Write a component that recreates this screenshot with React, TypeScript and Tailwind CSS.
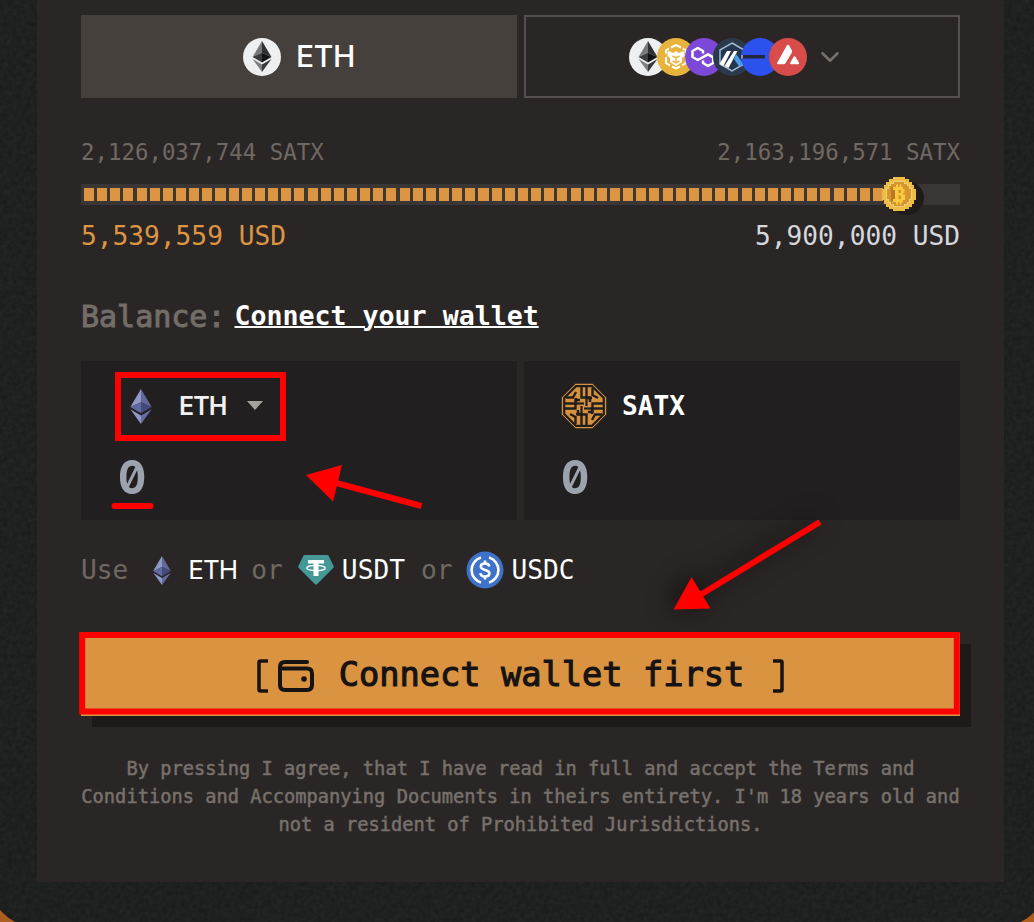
import { ChevronDown } from 'lucide-react';

const EthMark = ({ className, tone }: { className: string; tone: 'dark' | 'violet' }) => {
  const c =
    tone === 'dark'
      ? ['#77797a', '#303132', '#3b3c3d', '#131415', '#7d7e80', '#3a3b3c']
      : ['#8f98c8', '#62689a', '#6269a0', '#454a7c', '#8e97c6', '#646b9f'];
  return (
    <svg viewBox="0 0 22 36" className={className}>
      <path d="M11 0 0 18.5l11-5z" fill={c[0]} />
      <path d="m11 0 11 18.5-11-5z" fill={c[1]} />
      <path d="M0 18.5 11 13.5V25z" fill={c[2]} />
      <path d="M22 18.5 11 13.5V25z" fill={c[3]} />
      <path d="M0 20.8 11 27.3V36z" fill={c[4]} />
      <path d="M22 20.8 11 27.3V36z" fill={c[5]} />
    </svg>
  );
};

const EthCoin = () => (
  <span className="flex size-[38px] shrink-0 items-center justify-center rounded-full bg-[#eeeff1]">
    <EthMark className="h-[31px] w-5" tone="dark" />
  </span>
);

const BnbCoin = () => (
  <svg viewBox="0 0 38 38" className="-ml-[10px] size-[38px] shrink-0">
    <circle cx="19" cy="19" r="19" fill="#e8b33c" />
    <g fill="none" stroke="#fff" strokeWidth="2">
      <path d="m14 9.500 5-2.500 5 2.500M9 15.500v-3l3-2M29 15.500v-3l-3-2M9 19v6l4 2.500M29 19v6l-4 2.500M15 28.500l4 2 4-2" />
    </g>
    <path d="m12 13 4 2 3-2 3 2 4-2 1.500 1v4l-2.500 2v4L19 28l-6-4v-4l-2.500-2v-4z" fill="#fff" />
    <path d="m15.500 18 3.500 2 3.500-2M19 20v3.500M15.500 23l3.500 2 3.500-2" stroke="#e8b33c" strokeWidth="1.500" fill="none" />
  </svg>
);

const PolygonCoin = () => (
  <svg viewBox="0 0 38 38" className="-ml-[10px] size-[38px] shrink-0">
    <circle cx="19" cy="19" r="19" fill="#7b48d8" />
    <path
      d="m18 15.500v-2.500l-5.200-3-5.300 3v6l5.300 3L23 16.300l5.200 3v5.700L23 28l-5-3v-2.500"
      fill="none"
      stroke="#fff"
      strokeWidth="2.500"
      strokeLinejoin="round"
    />
  </svg>
);

const ArbitrumCoin = () => (
  <svg viewBox="0 0 38 38" className="-ml-[10px] size-[38px] shrink-0">
    <circle cx="19" cy="19" r="19" fill="#2c394b" />
    <path d="m19 5 12 7v14l-12 7-12-7V12z" fill="#24364d" stroke="#9fb9d3" strokeWidth="1.500" />
    <path d="M14 13h4L10.500 28 6.500 26zM21 13h3.500L15.500 30l-4-2z" fill="#fff" />
    <path d="m23 16 7.500 10-4 3-5.500-8z" fill="#4b9bea" />
  </svg>
);

const BaseCoin = () => (
  <svg viewBox="0 0 38 38" className="-ml-[10px] size-[38px] shrink-0">
    <circle cx="19" cy="19" r="19" fill="#2c51ed" />
    <path d="M1 17h23v3.500H1z" fill="#222740" />
    <path d="M0 17h2v3.500H0z" fill="#8798c0" />
  </svg>
);

const AvaxCoin = () => (
  <svg viewBox="0 0 38 38" className="-ml-[10px] size-[38px] shrink-0">
    <circle cx="19" cy="19" r="19" fill="#d84c49" />
    <path
      d="M17.800 7.500q1.200-1.500 2.400 0l2.600 4.800q.6 1.200 0 2.400L16.500 25.300q-.7 1-2 1H9q-1.500-.2-.8-1.600zM24.600 18.800q.9-1.200 1.800 0l3.600 6q.6 1.400-1 1.500h-7q-1.500-.1-.8-1.500z"
      fill="#fff"
    />
  </svg>
);

const BitcoinThumb = () => (
  <svg viewBox="0 0 34 34" className="size-[34px]">
    <path d="M11 0h12v2h4v3h3v3h2v4h2v11h-2v4h-2v3h-3v2h-4v2H11v-2H7v-2H4v-3H2v-4H0V12h2V8h2V5h3V2h4z" fill="#eebd46" />
    <path d="M11 4h12v2h3v2h2v3h2v12h-2v3h-2v2h-3v2H11v-2H8v-2H6v-3H4V11h2V8h2V6h3z" fill="#ecd074" />
    <path d="M12 5h10v2h3v2h2v3h2v10h-2v3h-2v2h-3v2H12v-2H9v-2H7v-3H5V12h2V9h2V7h3z" fill="#d8952e" />
    <path d="M9 10h4v14H9z" fill="#b97822" />
    <path
      d="M11 10h3V7.500h2V10h1.500V7.500h2V10H21v2h1.500v4H21v1.500h2V23h-2v2h-1.500v2.500h-2V25H16v2.500h-2V25h-3v-3h2v-9h-2zM16.500 13v3H19v-3zM16.500 18.500V22H19v-3.500z"
      fill="#f9c93f"
      fillRule="evenodd"
    />
  </svg>
);

const SatxLogo = () => (
  <svg viewBox="0 0 46 46" className="size-[46px]" fill="none">
    <path d="M14.500.8h17l13.700 13.700v17L31.500 45.200h-17L.8 31.500v-17z" fill="#d8923e" />
    <path d="M15 3.200h16L42.800 15v16L31 42.800H15L3.200 31V15z" stroke="#211e1e" strokeWidth="2.200" />
    {/* knot strands, same quarter turned around the centre */}
    {['rotate(0 23 23)', 'rotate(90 23 23)', 'rotate(180 23 23)', 'rotate(270 23 23)'].map((turn) => (
      <g key={turn} transform={turn}>
        <path d="M20.500 3v11.500H29V19M4 20.500h11V15M5 14.500h7L15 9" stroke="#211e1e" strokeWidth="2.400" />
        <path d="M15 20.500h8" stroke="#211e1e" strokeWidth="2.200" />
      </g>
    ))}
  </svg>
);

const TetherLogo = () => (
  <svg viewBox="0 0 36 30" className="h-[30px] w-9">
    <path d="M7 0h22q1 0 1.600.8L35.600 11q.5 1-.2 1.800L19 29.300q-1 .9-2 0L.6 12.800Q-.1 12 .4 11L5.400.8Q6 0 7 0z" fill="#459895" />
    <path d="M10 5h16v3.500h-5.500v12.500h-5V8.500H10z" fill="#fff" />
    <ellipse cx="18" cy="13" rx="9.300" ry="2.700" fill="none" stroke="#fff" strokeWidth="1.300" />
  </svg>
);

const UsdcLogo = () => (
  <svg viewBox="0 0 38 38" className="size-[38px]">
    <circle cx="19" cy="19" r="18.500" fill="#3e73c9" />
    <g fill="none" stroke="#fff" strokeWidth="2.600">
      <path d="M15 6.500a13 13 0 0 0 0 25M23 6.500a13 13 0 0 1 0 25" />
      <path d="M23.300 15.500c-.3-2.200-2-3-4.300-3-2.400 0-4.200 1-4.200 3.100 0 4.600 8.600 2.100 8.600 6.700 0 2.200-1.900 3.200-4.400 3.200-2.600 0-4.300-1.100-4.600-3.400M19 9.500v3M19 25.500v3" />
    </g>
  </svg>
);

const WalletIcon = () => (
  <svg viewBox="0 0 38 34" className="h-[34px] w-[38px]" fill="none" stroke="#171313" strokeWidth="4">
    <path d="M30 3H8Q3 3 3 8v18q0 5 5 5h22q5 0 5-5V14.500q0-5-5-5H3" strokeLinecap="round" strokeLinejoin="round" />
    <circle cx="27" cy="20" r="2.800" fill="#171313" stroke="none" />
  </svg>
);

const Noise = () => (
  <svg className="absolute inset-0 size-full opacity-[0.05]">
    <filter id="grain" colorInterpolationFilters="sRGB">
      <feTurbulence type="fractalNoise" baseFrequency="0.22" numOctaves="3" />
      <feColorMatrix values="1 0 0 0 0  1 0 0 0 0  1 0 0 0 0  0 0 0 0 1" />
    </filter>
    <rect width="100%" height="100%" filter="url(#grain)" />
  </svg>
);

const Annotations = () => (
  <svg viewBox="0 0 1034 922" className="pointer-events-none absolute inset-0 h-[922px] w-[1034px]">
    <g fill="none" stroke="#f00" strokeWidth="6">
      <path d="M118 375h165v63H118z" />
      <path d="M82.200 635h874.600v76.500H82.200z" />
      <path d="M114.500 506h36" strokeLinecap="round" />
      <path d="m421.500 506-87-23.500" />
    </g>
    <path d="m306 475 36-10-9 36.500z" fill="#f00" />
    <g className="drop-shadow-[-4px_-2px_12px_rgba(0,0,0,0.7)]">
      <path d="M820 522 700 595" stroke="#f00" strokeWidth="6" />
      <path d="m673.500 609.500 18-32.500 19 31.500z" fill="#f00" />
    </g>
  </svg>
);

const mono = "font-['DejaVu_Sans_Mono',monospace] whitespace-pre";
const sans = 'font-[Inter,sans-serif]';

const App = () => {
  return (
    <div className="relative h-[922px] w-[1034px] overflow-hidden bg-[#ad5d20]">
      <div className="relative -mr-[14px] -ml-[10px] h-[927px] overflow-hidden rounded-br-[49px] rounded-bl-[46px] bg-[#1a1b1b]">
        <Noise />
        <main className="relative mr-[44px] ml-[47px] h-[882px] bg-[#2a2625] pt-[15px] pr-[44px] pl-[44px]">
          <div className="grid h-[83px] grid-cols-2 gap-[7px]">
            <button className="flex items-center justify-center gap-[15px] bg-[#45403c]">
              <EthCoin />
              <span className={`${sans} text-[30px] font-medium tracking-[-0.3px] text-white`}>ETH</span>
            </button>
            <button className="flex items-center justify-center border-2 border-[#55504e] pr-[10px]">
              <EthCoin />
              <BnbCoin />
              <PolygonCoin />
              <ArbitrumCoin />
              <BaseCoin />
              <AvaxCoin />
              <ChevronDown className="ml-2 size-[30px] text-[#77716c]" strokeWidth={2} />
            </button>
          </div>

          <div className={`${mono} mt-[39px] flex h-8 items-center justify-between text-[22.4px] text-[#6f6964]`}>
            <span>2,126,037,744 SATX</span>
            <span>2,163,196,571 SATX</span>
          </div>
          <div className="mt-[15px] flex h-[21px] items-center bg-[#3a3636] pl-[3px]">
            <div className="h-[13px] w-[802px] shrink-0 bg-[repeating-linear-gradient(90deg,#dc9542_0_10px,#40372f_10px_13.150px)]" />
            <div className="-mt-[2px] -ml-1 rounded-full shadow-[8px_4px_0_#1e1b1a]">
              <BitcoinThumb />
            </div>
          </div>
          <div className={`${mono} mt-[14px] flex h-9 items-center justify-between text-[26.2px]`}>
            <span className="text-[#dc9542]">5,539,559 USD</span>
            <span className="text-[#d5d8de]">5,900,000 USD</span>
          </div>

          <div className={`${mono} mt-[41px] flex h-10 items-center`}>
            <span className="text-[30px] text-[#736d68] [-webkit-text-stroke:1px]">Balance:</span>
            <a className="ml-[9px] text-[26.6px] font-bold text-white underline decoration-2 underline-offset-[1px]">
              Connect your wallet
            </a>
          </div>

          <div className="mt-[25px] grid h-[159px] grid-cols-2 gap-[7px]">
            <div className="bg-[#211f20] pt-[22px] pl-[37px]">
              <div className="flex h-[46px] items-center pl-[12px]">
                <EthMark className="h-[35px] w-[22px]" tone="violet" />
                <span className={`${sans} mt-px ml-[27px] w-[50px] text-[25px] font-semibold tracking-[-0.9px] text-[#f1f1f1]`}>ETH</span>
                <svg viewBox="0 0 16 9" className="-mt-px ml-[18px] h-[9px] w-4">
                  <path d="M0 0h16L8 9z" fill="#a5a19c" />
                </svg>
              </div>
              <div className={`${sans} mt-[25px] flex h-[46px] items-center text-[46px] font-bold text-[#9ca3af] [font-feature-settings:'zero','tnum']`}>
                <span className="inline-block origin-left scale-x-95">0</span>
              </div>
            </div>
            <div className="bg-[#211f20] pt-[22px] pl-[37px]">
              <div className="flex h-[46px] items-center gap-[15px]">
                <SatxLogo />
                <span className={`${mono} mt-0.5 text-[26.2px] font-bold text-white`}>SATX</span>
              </div>
              <div className={`${sans} mt-[25px] flex h-[46px] items-center text-[46px] font-bold text-[#9ca3af] [font-feature-settings:'zero','tnum']`}>
                <span className="inline-block origin-left scale-x-95">0</span>
              </div>
            </div>
          </div>

          <div className={`${mono} mt-[30px] flex h-10 items-center text-[26.2px] text-[#6f6964]`}>
            <span className="mt-0.5">Use</span>
            <EthMark className="ml-[25px] h-[29px] w-[18px]" tone="violet" />
            <span className={`${sans} -mt-0.5 ml-[17px] w-[48px] text-[26px] tracking-[-1px] text-white`}>ETH</span>
            <span className="mt-0.5 ml-[15px]">or</span>
            <span className="ml-[15px]">
              <TetherLogo />
            </span>
            <span className="mt-0.5 ml-[8px] text-white">USDT</span>
            <span className="mt-0.5 ml-4">or</span>
            <span className="ml-[14px]">
              <UsdcLogo />
            </span>
            <span className="mt-0.5 ml-[7px] text-white">USDC</span>
          </div>

          <button
            className={`${mono} mt-[43px] flex h-[83px] w-full items-center justify-center bg-[#da9340] pt-0.5 text-[33.700px] text-[#171313] shadow-[11px_11px_0_#1d1a19] [-webkit-text-stroke:1.1px]`}
          >
            <svg viewBox="0 0 11 34" className="h-[34px] w-[11px]" fill="none" stroke="currentColor" strokeWidth="3.500">
              <path d="M11 2H3.500Q2 2 2 3.500v27Q2 32 3.500 32H11" />
            </svg>
            <span className="ml-[9px]">
              <WalletIcon />
            </span>
            <span className="ml-[24px]">Connect wallet first</span>
            <svg viewBox="0 0 11 34" className="ml-[29px] h-[34px] w-[11px]" fill="none" stroke="currentColor" strokeWidth="3.500">
              <path d="M0 2h7.500Q9 2 9 3.500v27Q9 32 7.500 32H0" />
            </svg>
          </button>

          <p className={`${mono} mt-[39px] text-center text-[18.720px] leading-7 text-[#77716c] [-webkit-text-stroke:0.500px]`}>
            By pressing I agree, that I have read in full and accept the Terms and{'\n'}
            Conditions and Accompanying Documents in theirs entirety. I&apos;m 18 years old and{'\n'}
            not a resident of Prohibited Jurisdictions.
          </p>
        </main>
      </div>
      <Annotations />
    </div>
  );
};

export default App;
